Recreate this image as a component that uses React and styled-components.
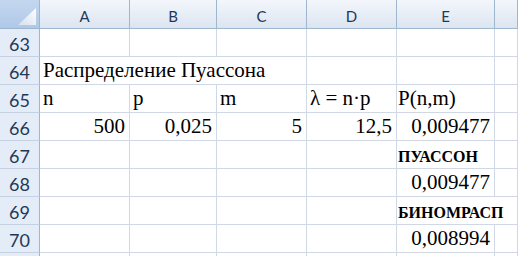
import React from "react";
import styled, { createGlobalStyle } from "styled-components";

const Global = createGlobalStyle`
  html, body { margin: 0; padding: 0; background: #ffffff; }
  body { width: 518px; height: 256px; overflow: hidden; }
`;

const Sheet = styled.div`
  display: grid;
  grid-template-columns: 40px 90px 87px 90px 90px 98px 1fr;
  grid-template-rows: 29px;
  grid-auto-rows: 28px;
  width: 518px;
  height: 256px;
  overflow: hidden;
  background: #ffffff;
`;

const Corner = styled.div`
  box-sizing: border-box;
  border-right: 1px solid #9eb6ce;
  border-bottom: 1px solid #9eb6ce;
  background: linear-gradient(#c4d7ef, #b0c8e8);
  display: flex;
  align-items: flex-end;
  justify-content: flex-end;
  padding: 0 3px 3px 0;
  svg { display: block; }
`;

const ColHead = styled.div`
  box-sizing: border-box;
  border-right: 1px solid #9eb6ce;
  border-bottom: 1px solid #9eb6ce;
  background: linear-gradient(#f3f6fb 0%, #e9eff7 45%, #dbe4f0 100%);
  display: flex;
  align-items: center;
  justify-content: center;
  padding-top: 4px;
  font-family: Lato, "Open Sans", sans-serif;
  font-size: 15px;
  color: #1f3858;
`;

const RowHead = styled.div`
  box-sizing: border-box;
  border-right: 1px solid #9eb6ce;
  border-bottom: 1px solid #c5d1e0;
  background: #e4ecf7;
  display: flex;
  align-items: center;
  justify-content: center;
  padding-top: 3px;
  font-family: Lato, "Open Sans", sans-serif;
  font-size: 18px;
  color: #1f3858;
`;

const Cell = styled.div`
  box-sizing: border-box;
  border-right: 1px solid #d0d7e5;
  border-bottom: 1px solid #d0d7e5;
  grid-column: ${(p) => (p.$span ? `span ${p.$span}` : "auto")};
  display: flex;
  align-items: flex-end;
  justify-content: ${(p) => (p.$right ? "flex-end" : "flex-start")};
  padding-right: 4px;
  padding-left: ${(p) => p.$pl}px;
  padding-bottom: ${(p) => (p.$bold ? 2 : 1)}px;
  white-space: nowrap;
  overflow: visible;
  font-family: "Liberation Serif", serif;
  font-size: ${(p) => (p.$bold ? 16 : 21)}px;
  font-weight: ${(p) => (p.$bold ? 700 : 400)};
  color: #000000;
`;

const cols = ["A", "B", "C", "D", "E", ""];

const empty = [{}, {}, {}, {}, {}, {}];

const rows = [
  { n: "63", cells: empty },
  { n: "64", cells: [{ t: "Распределение Пуассона", span: 3 }, {}, {}, {}] },
  {
    n: "65",
    cells: [{ t: "n" }, { t: "p" }, { t: "m" }, { t: "λ = n·p" }, { t: "P(n,m)", pl: 1 }, {}],
  },
  {
    n: "66",
    cells: [
      { t: "500", r: true },
      { t: "0,025", r: true },
      { t: "5", r: true },
      { t: "12,5", r: true },
      { t: "0,009477", r: true },
      {},
    ],
  },
  { n: "67", cells: [{}, {}, {}, {}, { t: "ПУАССОН", b: true, pl: 1 }, {}] },
  { n: "68", cells: [{}, {}, {}, {}, { t: "0,009477", r: true }, {}] },
  { n: "69", cells: [{}, {}, {}, {}, { t: "БИНОМРАСП", b: true, pl: 1, span: 2 }] },
  { n: "70", cells: [{}, {}, {}, {}, { t: "0,008994", r: true }, {}] },
  { n: "", cells: empty },
];

function SelectAll() {
  return (
    <Corner>
      <svg width="18" height="17" viewBox="0 0 18 17">
        <defs>
          <linearGradient id="tri" x1="1" y1="0" x2="0" y2="1">
            <stop offset="0" stopColor="#ffffff" />
            <stop offset="1" stopColor="#d5dfec" />
          </linearGradient>
        </defs>
        <polygon points="18,0 18,17 0,17" fill="url(#tri)" />
      </svg>
    </Corner>
  );
}

export default function App() {
  return (
    <>
      <Global />
      <Sheet>
        <SelectAll />
        {cols.map((c, i) => (
          <ColHead key={i}>{c}</ColHead>
        ))}
        {rows.map((row, ri) => (
          <React.Fragment key={ri}>
            <RowHead>{row.n}</RowHead>
            {row.cells.map((c, i) => (
              <Cell key={i} $right={c.r} $bold={c.b} $span={c.span} $pl={c.pl ?? 3}>
                {c.t}
              </Cell>
            ))}
          </React.Fragment>
        ))}
      </Sheet>
    </>
  );
}
